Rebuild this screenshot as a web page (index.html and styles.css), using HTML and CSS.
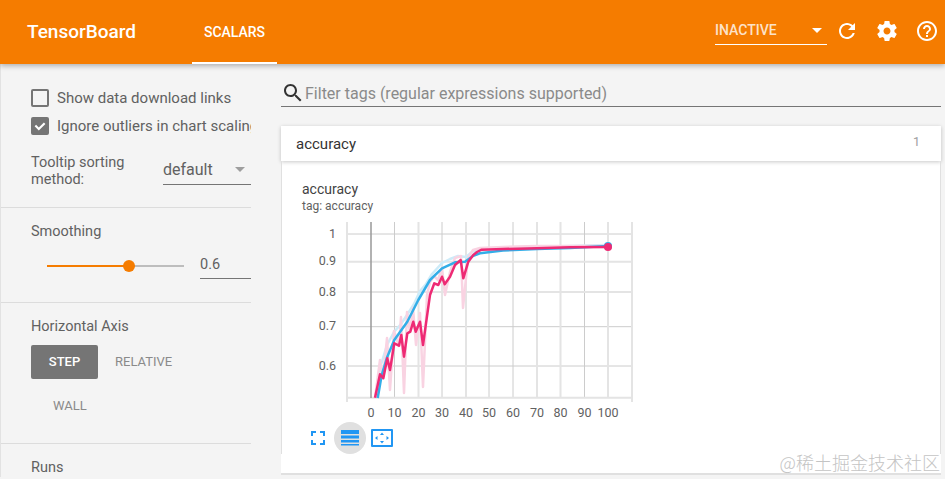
FILE: index.html
```html
<!DOCTYPE html>
<html lang="en">
<head>
    <meta charset="UTF-8">
    <title>TensorBoard</title>
    <link rel="stylesheet" href="styles.css">
</head>
<body>
    <!-- Top bar -->
    <header class="topbar">
        <div class="brand">TensorBoard</div>
        <div class="tab">SCALARS</div>
        <div class="run-select">
            <span>INACTIVE</span>
            <i class="arrow arrow-white"></i>
        </div>
        <button class="top-icon">
            <svg viewBox="0 0 24 24"><path d="M17.65 6.35C16.2 4.9 14.21 4 12 4c-4.42 0-7.99 3.58-7.99 8s3.57 8 7.99 8c3.73 0 6.84-2.55 7.73-6h-2.08c-.82 2.33-3.04 4-5.65 4-3.31 0-6-2.69-6-6s2.69-6 6-6c1.66 0 3.14.69 4.22 1.78L13 11h7V4l-2.35 2.35z"/></svg>
        </button>
        <button class="top-icon">
            <svg viewBox="0 0 24 24"><path d="M19.43 12.98c.04-.32.07-.64.07-.98s-.03-.66-.07-.98l2.11-1.65c.19-.15.24-.42.12-.64l-2-3.46c-.12-.22-.39-.3-.61-.22l-2.49 1c-.52-.4-1.08-.73-1.69-.98l-.38-2.65C14.46 2.18 14.25 2 14 2h-4c-.25 0-.46.18-.49.42l-.38 2.65c-.61.25-1.17.59-1.69.98l-2.49-1c-.23-.09-.49 0-.61.22l-2 3.46c-.13.22-.07.49.12.64l2.11 1.65c-.04.32-.07.65-.07.98s.03.66.07.98l-2.11 1.65c-.19.15-.24.42-.12.64l2 3.46c.12.22.39.3.61.22l2.49-1c.52.4 1.08.73 1.69.98l.38 2.65c.03.24.24.42.49.42h4c.25 0 .46-.18.49-.42l.38-2.65c.61-.25 1.17-.59 1.69-.98l2.49 1c.23.09.49 0 .61-.22l2-3.46c.12-.22.07-.49-.12-.64l-2.11-1.65zM12 15.5c-1.93 0-3.5-1.57-3.5-3.5s1.57-3.5 3.5-3.5 3.5 1.57 3.5 3.5-1.57 3.5-3.5 3.5z"/></svg>
        </button>
        <button class="top-icon">
            <svg viewBox="0 0 24 24"><path d="M11 18h2v-2h-2v2zm1-16C6.48 2 2 6.48 2 12s4.48 10 10 10 10-4.48 10-10S17.52 2 12 2zm0 18c-4.41 0-8-3.59-8-8s3.59-8 8-8 8 3.59 8 8-3.59 8-8 8zm0-14c-2.21 0-4 1.79-4 4h2c0-1.1.9-2 2-2s2 .9 2 2c0 2-3 1.75-3 5h2c0-2.25 3-2.5 3-5 0-2.21-1.79-4-4-4z"/></svg>
        </button>
    </header>

    <div class="layout">
        <!-- Sidebar -->
        <aside class="sidebar">
            <section class="side-section options">
                <label class="check-row">
                    <span class="checkbox"></span>
                    <span class="check-label">Show data download links</span>
                </label>
                <label class="check-row">
                    <span class="checkbox checked">
                        <svg viewBox="0 0 18 18"><path d="M3.6 9.3l1.5-1.5 2.7 2.7 5.1-5.1 1.5 1.5-6.6 6.6z"/></svg>
                    </span>
                    <span class="check-label">Ignore outliers in chart scaling</span>
                </label>
                <div class="sort-row">
                    <div class="sort-label">Tooltip sorting method:</div>
                    <div class="sort-select">
                        <span>default</span>
                        <i class="arrow arrow-grey"></i>
                    </div>
                </div>
            </section>

            <section class="side-section smoothing">
                <div class="side-title">Smoothing</div>
                <div class="slider-row">
                    <div class="slider">
                        <div class="slider-fill"></div>
                        <div class="slider-thumb"></div>
                    </div>
                    <div class="slider-value">0.6</div>
                </div>
            </section>

            <section class="side-section axis">
                <div class="side-title">Horizontal Axis</div>
                <div class="axis-buttons">
                    <div class="axis-btn active">STEP</div>
                    <div class="axis-btn">RELATIVE</div>
                    <div class="axis-btn">WALL</div>
                </div>
            </section>

            <section class="side-section runs">
                <div class="side-title">Runs</div>
            </section>
        </aside>

        <!-- Main column -->
        <main class="main">
            <div class="filter">
                <svg class="search-icon" viewBox="0 0 24 24"><path d="M15.5 14h-.79l-.28-.27C15.41 12.59 16 11.11 16 9.5 16 5.91 13.09 3 9.5 3S3 5.91 3 9.5 5.91 16 9.5 16c1.61 0 3.09-.59 4.23-1.57l.27.28v.79l5 4.99L20.49 19l-4.99-5zm-6 0C7.01 14 5 11.99 5 9.5S7.01 5 9.5 5 14 7.01 14 9.5 11.99 14 9.5 14z"/></svg>
                <span>Filter tags (regular expressions supported)</span>
            </div>

            <div class="category">
                <div class="category-head">
                    <span>accuracy</span>
                    <span class="category-count">1</span>
                </div>
                <div class="category-body">
                    <div class="chart-title">accuracy</div>
                    <div class="chart-tag">tag: accuracy</div>

                    <svg class="chart" viewBox="302 215 340 206">
                        <!-- grid -->
                        <g class="grid-thin">
                            <path d="M347 234H632M347 326.7H632M347 366H632"/>
                            <path d="M394.5 222V398M442 222V398M489 222V398M513 222V398M584.5 222V398"/>
                        </g>
                        <g class="grid-thick">
                            <path d="M347 261.7H632M347 292H632M347 397.7H632"/>
                            <path d="M347 222V402M418.5 222V398M466 222V398M537 222V398M560.5 222V398M608 222V398M632 222V402"/>
                        </g>
                        <path class="axis-line" d="M371 222V398"/>

                        <!-- raw values -->
                        <polyline class="raw raw-blue" points="376,398 380,368 387,345 394,332 401,324 407,315 414,304 420,291 426,284 432,274 442,263 450,259 458,256 466,257 472,252 480,249 503,248 537,247 570,246 608,245"/>
                        <polyline class="raw raw-pink" points="375,398 380,360 383,378 387,338 390,390 394,331 399,346 401,317 404,393 407,312 410,332 413,308 416,345 420,313 423,387 427,295 430,282 434,276 438,280 442,268 445,295 450,272 455,258 461,256 463,308 468,258 473,250 480,248 503,247 537,246 570,246 608,246"/>

                        <!-- smoothed values -->
                        <polyline class="line line-blue" points="377.7,398 381.7,375 387.3,356.7 394.3,340 407.3,321.7 418.3,300 430,280 442,268.3 455,262.3 465,261.7 473.3,255.7 480,253.3 503,250.5 537,249 570,248 608,246"/>
                        <circle class="dot-blue" cx="608" cy="246" r="4"/>
                        <polyline class="line line-pink" points="375,397.7 380,374.3 383.3,378.3 387.3,358.3 390,370 394.3,343.3 399,345.7 401.3,335 404,356.7 407.3,333.3 410.3,331.7 413.3,321.7 415.7,331.7 420,321.7 423,345 426.7,318.3 430,295 434.3,283.3 438.3,285 442,276.7 444.7,284.3 450,276.7 455,265 460.7,260 463.3,278.3 468.3,261.7 473.3,255 477,252 481.7,249.7 503,249 537,248.3 570,247.3 608,247"/>
                        <circle class="dot-pink" cx="608" cy="247" r="4"/>

                        <!-- tick labels -->
                        <g class="ticks-y">
                            <text x="336" y="238">1</text>
                            <text x="336" y="265">0.9</text>
                            <text x="336" y="296">0.8</text>
                            <text x="336" y="330">0.7</text>
                            <text x="336" y="370">0.6</text>
                        </g>
                        <g class="ticks-x">
                            <text x="371" y="417">0</text>
                            <text x="394.5" y="417">10</text>
                            <text x="418.5" y="417">20</text>
                            <text x="442" y="417">30</text>
                            <text x="466" y="417">40</text>
                            <text x="489" y="417">50</text>
                            <text x="513" y="417">60</text>
                            <text x="537" y="417">70</text>
                            <text x="560.5" y="417">80</text>
                            <text x="584.5" y="417">90</text>
                            <text x="608" y="417">100</text>
                        </g>
                    </svg>

                    <div class="chart-actions">
                        <div class="chart-btn">
                            <svg viewBox="0 0 24 24"><path d="M7 14H5v5h5v-2H7v-3zm-2-4h2V7h3V5H5v5zm12 7h-3v2h5v-5h-2v3zM14 5v2h3v3h2V5h-5z"/></svg>
                        </div>
                        <div class="chart-btn selected">
                            <svg viewBox="0 0 24 24"><path d="M3 4h18v4H3zM3 9.500h18v3H3zM3 14h18v2.500H3zM3 18h18v1.500H3z"/></svg>
                        </div>
                        <div class="chart-btn">
                            <svg viewBox="0 0 24 24"><path d="M2 3h20a1 1 0 0 1 1 1v16a1 1 0 0 1-1 1H2a1 1 0 0 1-1-1V4a1 1 0 0 1 1-1zm1 2v14h18V5zM12 6.500l2 2.500h-4zM12 17.500l-2-2.500h4zM5 12l2.500-2v4zM19 12l-2.500 2v-4z" fill-rule="evenodd"/></svg>
                        </div>
                    </div>
                </div>
            </div>
        </main>
    </div>

    <div class="watermark">@稀土掘金技术社区</div>
</body>
</html>
```

FILE: styles.css
```css
/* Base */
html, body {
    height: 479px;
    overflow: hidden;
}

body {
    margin: 0;
    font-family: Roboto, "Liberation Sans", sans-serif;
    background-color: #f4f4f4;
    color: #424242;
    position: relative;
}

/* Top bar */
.topbar {
    display: flex;
    align-items: center;
    height: 64px;
    background-color: #f57c00;
    color: #fff;
    box-shadow: 0 2px 5px rgba(0, 0, 0, 0.28);
    position: relative;
    z-index: 2;
}

.brand {
    width: 192px;
    padding-left: 27px;
    padding-bottom: 2px;
    box-sizing: border-box;
    font-size: 19px;
    font-weight: 500;
}

.tab {
    width: 85px;
    height: 64px;
    line-height: 64px;
    box-sizing: border-box;
    border-bottom: 2px solid #fff;
    text-align: center;
    font-size: 14px;
    font-weight: 500;
}

.run-select {
    display: flex;
    align-items: center;
    justify-content: space-between;
    width: 112px;
    height: 29px;
    margin-left: auto;
    margin-top: -3px;
    padding-right: 5px;
    box-sizing: border-box;
    border-bottom: 1px solid #fff;
    font-size: 14px;
    font-weight: 500;
    color: rgba(255, 255, 255, 0.8);
}

.arrow {
    display: block;
    width: 0;
    height: 0;
    border-left: 5px solid transparent;
    border-right: 5px solid transparent;
}

.arrow-white {
    border-top: 5px solid #fff;
}

.arrow-grey {
    border-top: 5px solid #9e9e9e;
}

.top-icon {
    width: 40px;
    height: 40px;
    padding: 8px;
    border: none;
    background: none;
    margin-top: -2px;
    flex: none;
}

.top-icon:last-child {
    margin-right: -2px;
}

.top-icon svg {
    display: block;
    width: 24px;
    height: 24px;
    fill: #fff;
}

/* Page layout */
.layout {
    display: flex;
    border-left: 1px solid #e2e2e2;
}

.sidebar {
    width: 250px;
    flex: none;
}

.side-section {
    border-bottom: 1px solid #dcdcdc;
    padding-left: 30px;
    box-sizing: border-box;
}

.side-title {
    font-size: 14.5px;
    line-height: 18px;
    color: #616161;
}

/* Options */
.options {
    height: 144px;
    padding-top: 25px;
}

.check-row {
    display: flex;
    align-items: center;
    gap: 8px;
    height: 18px;
    margin-bottom: 10px;
}

.checkbox {
    width: 18px;
    height: 18px;
    box-sizing: border-box;
    border: 2px solid #757575;
    border-radius: 2px;
    flex: none;
}

.checkbox.checked {
    background-color: #757575;
}

.checkbox svg {
    display: block;
    width: 18px;
    height: 18px;
    margin: -2px;
    fill: #fff;
}

.check-label {
    font-size: 15px;
    white-space: nowrap;
    overflow: hidden;
    width: 194px;
    color: #616161;
}

.sort-row {
    display: flex;
    align-items: flex-start;
    margin-top: 19px;
}

.sort-label {
    width: 132px;
    font-size: 14.5px;
    line-height: 17px;
    color: #616161;
}

.sort-select {
    display: flex;
    align-items: center;
    justify-content: space-between;
    width: 88px;
    height: 28px;
    margin-top: 3px;
    padding-right: 6px;
    padding-bottom: 2px;
    box-sizing: border-box;
    border-bottom: 1px solid #757575;
    font-size: 16px;
    color: #616161;
}

/* Smoothing */
.smoothing {
    height: 95px;
    padding-top: 15px;
}

.slider-row {
    display: flex;
    align-items: flex-start;
    margin-top: 10px;
}

.slider {
    position: relative;
    width: 137px;
    height: 2px;
    margin-left: 16px;
    margin-top: 14px;
    background-color: #bdbdbd;
}

.slider-fill {
    width: 82px;
    height: 2px;
    background-color: #f57c00;
}

.slider-thumb {
    position: absolute;
    left: 76px;
    top: -5px;
    width: 12px;
    height: 12px;
    border-radius: 50%;
    background-color: #f57c00;
}

.slider-value {
    width: 51px;
    height: 28px;
    margin-left: 16px;
    line-height: 28px;
    box-sizing: border-box;
    border-bottom: 1px solid #757575;
    font-size: 14.5px;
    color: #616161;
}

/* Horizontal axis */
.axis {
    height: 141px;
    padding-top: 15px;
}

.axis-buttons {
    display: flex;
    flex-wrap: wrap;
    margin-top: 9px;
}

.axis-btn {
    height: 34px;
    line-height: 34px;
    padding: 0 17px;
    border-radius: 2px;
    font-size: 13px;
    font-weight: 400;
    color: #8a8a8a;
}

.axis-btn.active {
    width: 67px;
    box-sizing: border-box;
    padding: 0;
    text-align: center;
    font-weight: 500;
    color: #fff;
    background-color: #757575;
}

.axis-btn:last-child {
    margin-left: 5px;
    margin-top: 10px;
}

.runs {
    padding-top: 15px;
    border-bottom: none;
}

/* Main column */
.main {
    width: 660px;
    margin-left: 30px;
    flex: none;
}

.filter {
    display: flex;
    align-items: center;
    height: 43px;
    padding-top: 16px;
    box-sizing: border-box;
    border-bottom: 1px solid #757575;
    font-size: 16px;
    color: #8a8a8a;
}

.search-icon {
    width: 24px;
    height: 24px;
    fill: #333;
    flex: none;
}

/* Category card */
.category {
    margin-top: 19px;
    height: 349px;
    background-color: #fff;
    border-bottom: 2px solid #e0e0e0;
    box-sizing: border-box;
}

.category-head {
    display: flex;
    justify-content: space-between;
    align-items: center;
    height: 35px;
    padding: 1px 21px 0 15px;
    box-sizing: border-box;
    box-shadow: 0 1px 4px rgba(0, 0, 0, 0.22);
    background-color: #fff;
    font-size: 15px;
    color: #333;
}

.category-count {
    font-size: 12.5px;
    color: #9e9e9e;
    margin-top: -5px;
}

.category-body {
    padding: 20px 0 0 20px;
    border-left: 1px solid #e0e0e0;
    border-right: 1px solid #e0e0e0;
}

.chart-title {
    font-size: 14px;
    line-height: 16px;
    color: #424242;
}

.chart-tag {
    margin-top: 2px;
    font-size: 12px;
    line-height: 14px;
    color: #616161;
}

.chart {
    display: block;
    width: 340px;
    height: 206px;
    margin-top: 2px;
}

.grid-thin path {
    fill: none;
    stroke: #ccc;
    stroke-width: 1;
}

.grid-thick path {
    fill: none;
    stroke: #e4e4e4;
    stroke-width: 2;
}

.axis-line {
    fill: none;
    stroke: #999;
    stroke-width: 1.5;
}

.raw {
    fill: none;
    stroke-width: 2.5;
    stroke-linejoin: round;
}

.raw-blue {
    stroke: #cdebf8;
}

.raw-pink {
    stroke: #f9d3e2;
}

.line {
    fill: none;
    stroke-width: 2.5;
    stroke-linejoin: round;
}

.line-blue {
    stroke: #33aee8;
}

.line-pink {
    stroke: #ee2a74;
}

.dot-blue {
    fill: #33aee8;
}

.dot-pink {
    fill: #ee2a74;
}

.ticks-y text, .ticks-x text {
    font-family: Roboto, sans-serif;
    font-size: 12.5px;
    fill: #616161;
}

.ticks-y text {
    text-anchor: end;
}

.ticks-x text {
    text-anchor: middle;
}

.chart-actions {
    display: flex;
    margin-top: 1px;
}

.chart-btn {
    width: 32px;
    height: 32px;
    display: flex;
    align-items: center;
    justify-content: center;
    border-radius: 50%;
}

.chart-btn.selected {
    background-color: #e0e0e0;
}

.chart-btn svg {
    width: 24px;
    height: 24px;
    fill: #2196f3;
}

/* Watermark over the screenshot corner */
.watermark {
    position: absolute;
    right: 5px;
    bottom: 6px;
    font-family: "Noto Sans CJK SC", sans-serif;
    font-weight: 300;
    font-size: 18px;
    line-height: 22px;
    color: #c4c4c4;
}
```
